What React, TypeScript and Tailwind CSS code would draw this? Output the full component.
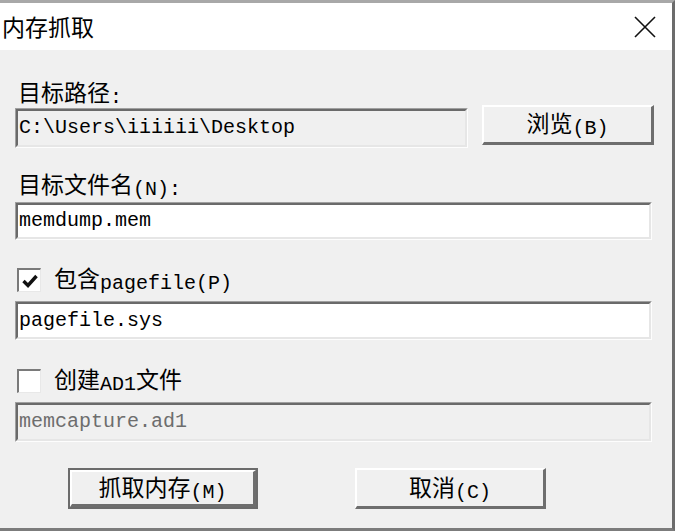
import React from 'react';

const cjk = { fontFamily: '"Noto Sans CJK SC", "Noto Sans", sans-serif' };
const mono = { fontFamily: '"Liberation Mono", "Noto Sans CJK SC", monospace' };

function Latin({ children }: { children: React.ReactNode }) {
    return <span className="text-[20px] align-[-2px]" style={mono}>{children}</span>;
}

function Sunken({ value, className, disabled, white }: { value: string; className: string; disabled?: boolean; white?: boolean }) {
    return (
        <div className={`border-t border-l border-[#a0a0a0] border-b border-r border-b-[#fdfdfd] border-r-[#fdfdfd] ${className}`}>
            <div className={`h-full border-t-2 border-l-2 border-[#6a6a6a] border-b-2 border-r-2 border-b-[#e6e6e6] border-r-[#e6e6e6] flex items-center pl-[1px] ${white ? 'bg-white' : 'bg-[#f0f0f0]'}`}>
                <span className={`text-[20px] leading-none ${disabled ? 'text-[#6d6d6d]' : 'text-black'}`} style={mono}>{value}</span>
            </div>
        </div>
    );
}

function Button({ children, className, isDefault }: { children: React.ReactNode; className: string; isDefault?: boolean }) {
    const face = (
        <div className="h-full border-t-2 border-l-2 border-white border-b-[3px] border-r-[3px] border-b-[#6e6e6e] border-r-[#6e6e6e] bg-[#f0f0f0] flex items-center justify-center text-[23px] text-black">
            <span>{children}</span>
        </div>
    );
    if (isDefault) {
        return <div className={`border-2 border-[#6b6b6b] ${className}`}>{face}</div>;
    }
    return <div className={className}>{face}</div>;
}

function Checkbox({ checked }: { checked?: boolean }) {
    return (
        <div className="w-[24px] h-[24px] border-t-2 border-l-2 border-[#7a7a7a] border-b border-r border-b-[#e8e8e8] border-r-[#e8e8e8] bg-white flex items-center justify-center">
            {checked && (
                <svg width="18" height="18" viewBox="0 0 18 18">
                    <polyline points="2.5,9 7,13.5 15.5,4" fill="none" stroke="#111" strokeWidth="3.4" />
                </svg>
            )}
        </div>
    );
}

export default function App() {
    return (
        <div className="w-[678px] h-[532px] bg-white overflow-hidden" style={cjk}>
            <div className="w-[675px] h-[531px] border-t-[3px] border-[#a8a8a8] border-r-[3px] border-r-[#6c6c6c] border-b-[3px] border-b-[#7c7c7c] flex flex-col bg-[#f0f0f0]">
                {/* Title bar */}
                <div className="h-[47px] bg-white flex items-center justify-between pl-[2px] pr-[16px] shrink-0">
                    <span className="text-[23px] text-black leading-none">内存抓取</span>
                    <svg width="22" height="22" viewBox="0 0 22 22">
                        <path d="M1 1 L21 21 M21 1 L1 21" stroke="#111" strokeWidth="1.6" />
                    </svg>
                </div>

                {/* Body */}
                <div className="flex flex-col pl-[15px] text-black">
                    <div className="mt-[27px] h-[28px] leading-[28px] text-[23px] pl-[3px]">目标路径<Latin>:</Latin></div>
                    <div className="flex items-start h-[43px]">
                        <Sunken value={'C:\\Users\\iiiiii\\Desktop'} className="mt-[3px] w-[453px] h-[40px]" />
                        <Button className="ml-[14px] w-[172px] h-[40px]">浏览<Latin>(B)</Latin></Button>
                    </div>

                    <div className="mt-[21px] h-[28px] leading-[28px] text-[23px] pl-[3px]">目标文件名<Latin>(N):</Latin></div>
                    <Sunken value="memdump.mem" white className="mt-[5px] w-[637px] h-[38px]" />

                    <div className="mt-[26px] h-[28px] flex items-center pl-[2px] gap-[13px]">
                        <Checkbox checked />
                        <span className="text-[23px] leading-[28px]">包含<Latin>pagefile(P)</Latin></span>
                    </div>
                    <Sunken value="pagefile.sys" white className="mt-[7px] w-[637px] h-[39px]" />

                    <div className="mt-[27px] h-[28px] flex items-center pl-[2px] gap-[13px]">
                        <Checkbox />
                        <span className="text-[23px] leading-[28px]">创建<Latin>AD1</Latin>文件</span>
                    </div>
                    <Sunken value="memcapture.ad1" disabled className="mt-[7px] w-[637px] h-[40px]" />

                    <div className="mt-[26px] flex">
                        <Button isDefault className="ml-[53px] w-[190px] h-[41px]">抓取内存<Latin>(M)</Latin></Button>
                        <Button className="ml-[97px] w-[191px] h-[41px]">取消<Latin>(C)</Latin></Button>
                    </div>
                </div>
            </div>
        </div>
    );
}
